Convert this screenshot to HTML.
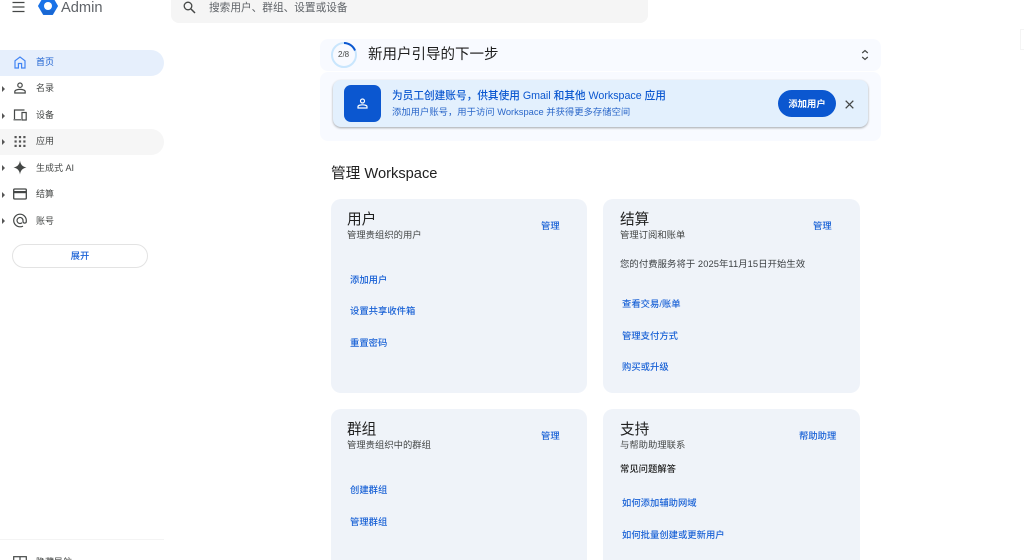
<!DOCTYPE html>
<html lang="zh">
<head>
<meta charset="utf-8">
<title>Admin</title>
<style>
html,body{margin:0;padding:0;width:1024px;height:560px;overflow:hidden;background:#fff}
body{position:relative;font-family:"Liberation Sans","Noto Sans CJK SC",sans-serif;color:#444746;filter:blur(.35px)}
.a{position:absolute;white-space:nowrap}
.nav{font-size:9px;line-height:14px;left:36px;color:#444746}
.tri{position:absolute;left:2px;width:0;height:0;border-left:3px solid #555;border-top:3px solid transparent;border-bottom:3px solid transparent}
.card{position:absolute;background:#eff3f9;border-radius:10px;width:257px}
.h{font-size:14.67px;line-height:18px;color:#1f1f1f}
.s{font-size:9.33px;line-height:13px;color:#444746}
.l{font-size:9.33px;line-height:13px;color:#1a62d6;font-weight:500}
svg{position:absolute;display:block}
</style>
</head>
<body>
<!-- top bar -->
<svg style="left:12px;top:1px" width="13" height="12" viewBox="0 0 13 12"><path d="M0.5 1.5H12.5M0.5 6H12.5M0.5 10.5H12.5" stroke="#444746" stroke-width="1.3" fill="none"/></svg>
<svg style="left:38px;top:-4px" width="20" height="20" viewBox="0 0 20 20"><path d="M5.5 1.5H14.5L19.5 10L14.5 18.5H5.5L0.5 10Z" fill="#1a73e8" stroke="#1a73e8" stroke-width="1" stroke-linejoin="round"/><path d="M14.5 18.5H5.5L3 14.2L17 14.2Z" fill="#1967d2"/><circle cx="10" cy="10" r="4" fill="#fff"/></svg>
<div class="a" style="left:61px;top:-1px;font-size:14.67px;line-height:18px;color:#5f6368">Admin</div>
<div class="a" style="left:171px;top:-10px;width:477px;height:33px;background:#f5f5f5;border-radius:8px"></div>
<svg style="left:183px;top:1px" width="13" height="13" viewBox="0 0 13 13"><circle cx="5" cy="5" r="3.8" stroke="#444746" stroke-width="1.3" fill="none"/><path d="M8 8L12 12" stroke="#444746" stroke-width="1.5"/></svg>
<div class="a" style="left:209px;top:1px;font-size:10.67px;line-height:14px;color:#5f6368">搜索用户、群组、设置或设备</div>

<!-- sidebar -->
<div class="a" style="left:-20px;top:50px;width:184px;height:26px;background:#e6effc;border-radius:13px"></div>
<div class="a" style="left:-20px;top:129px;width:184px;height:26px;background:#f6f6f6;border-radius:13px"></div>

<svg style="left:14px;top:56px" width="12" height="13" viewBox="0 0 12 13"><path d="M1 12V4.8L6 1L11 4.8V12H7.6V7.5H4.4V12Z" fill="none" stroke="#4285f4" stroke-width="1.2"/></svg>
<div class="a nav" style="top:55px;color:#1a5fd0">首页</div>

<div class="tri" style="top:86px"></div>
<svg style="left:14px;top:82px" width="12" height="12" viewBox="0 0 12 12"><circle cx="6" cy="3.2" r="2.2" fill="none" stroke="#444746" stroke-width="1.2"/><path d="M0.8 11V9.6C0.8 8.2 3.5 7.4 6 7.4S11.2 8.2 11.2 9.6V11Z" fill="none" stroke="#444746" stroke-width="1.2"/></svg>
<div class="a nav" style="top:81px">名录</div>

<div class="tri" style="top:113px"></div>
<svg style="left:13px;top:109px" width="14" height="12" viewBox="0 0 14 12"><path d="M1.5 10V1H11.5M0.5 10.8H8" fill="none" stroke="#444746" stroke-width="1.2"/><rect x="9" y="3.5" width="4.2" height="7.5" fill="none" stroke="#444746" stroke-width="1.2"/></svg>
<div class="a nav" style="top:108px">设备</div>

<div class="tri" style="top:139px"></div>
<svg style="left:14px;top:136px" width="12" height="11" viewBox="0 0 12 11" fill="#555"><rect x="0.5" y="0" width="2.2" height="2.2"/><rect x="4.9" y="0" width="2.2" height="2.2"/><rect x="9.3" y="0" width="2.2" height="2.2"/><rect x="0.5" y="4.4" width="2.2" height="2.2"/><rect x="4.9" y="4.4" width="2.2" height="2.2"/><rect x="9.3" y="4.4" width="2.2" height="2.2"/><rect x="0.5" y="8.8" width="2.2" height="2.2"/><rect x="4.9" y="8.8" width="2.2" height="2.2"/><rect x="9.3" y="8.8" width="2.2" height="2.2"/></svg>
<div class="a nav" style="top:134px">应用</div>

<div class="tri" style="top:165px"></div>
<svg style="left:13px;top:160px" width="14" height="15" viewBox="0 0 14 15"><path d="M7 0.5C7.6 4.6 9.4 6.7 13.5 7.5C9.4 8.3 7.6 10.4 7 14.5C6.4 10.4 4.6 8.3 0.5 7.5C4.6 6.7 6.4 4.6 7 0.5Z" fill="#444746"/></svg>
<div class="a nav" style="top:161px">生成式 AI</div>

<div class="tri" style="top:192px"></div>
<svg style="left:13px;top:188px" width="14" height="12" viewBox="0 0 14 12"><rect x="0.7" y="1" width="12.6" height="10" rx="1" fill="none" stroke="#444746" stroke-width="1.3"/><rect x="1" y="3" width="12" height="2.2" fill="#444746"/></svg>
<div class="a nav" style="top:187px">结算</div>

<div class="tri" style="top:218px"></div>
<svg style="left:13px;top:213px" width="14" height="15" viewBox="0 0 14 14"><path d="M10 12.6C9 13.1 8 13.3 7 13.3A6.3 6.3 0 1 1 13.3 7V8C13.3 9 12.6 9.6 11.7 9.6S10 9 10 8V7A3 3 0 1 0 9 9.2" fill="none" stroke="#444746" stroke-width="1.2"/></svg>
<div class="a nav" style="top:214px">账号</div>

<div class="a" style="left:12px;top:244px;width:134px;height:22px;border:1px solid #e3e3e3;border-radius:12px;background:#fff;text-align:center;font-size:9.33px;line-height:23px;color:#1a62d6;font-weight:500">展开</div>

<div class="a" style="left:0;top:539px;width:164px;height:1px;background:#f4f4f4"></div>
<svg style="left:13px;top:556px" width="14" height="12" viewBox="0 0 14 12"><rect x="0.7" y="0.7" width="12.6" height="10" fill="none" stroke="#444746" stroke-width="1.2"/><path d="M7 1V10" stroke="#444746" stroke-width="1.2"/></svg>
<div class="a nav" style="top:555px">隐藏导航</div>

<div class="a" style="left:1020px;top:29px;width:6px;height:21px;border:1px solid #f4f4f4;box-sizing:border-box"></div>

<!-- onboarding -->
<div class="a" style="left:320px;top:39px;width:561px;height:32px;background:#f8faff;border-radius:8px"></div>
<div class="a" style="left:320px;top:72px;width:561px;height:69px;background:#f8faff;border-radius:8px"></div>
<svg style="left:330px;top:41px" width="28" height="28" viewBox="0 0 28 28"><circle cx="14" cy="14" r="12" fill="none" stroke="#c9e6fd" stroke-width="2"/><path d="M14 2A12 12 0 0 1 25 9.5" fill="none" stroke="#0b57d0" stroke-width="2"/></svg>
<div class="a" style="left:338px;top:49px;font-size:8px;line-height:12px;color:#444746">2/8</div>
<div class="a" style="left:368px;top:46px;font-size:14.5px;line-height:19px;color:#1f1f1f">新用户引导的下一步</div>
<svg style="left:861px;top:49px" width="8" height="12" viewBox="0 0 8 12"><path d="M1.2 4L4 1.5L6.8 4M1.2 8L4 10.5L6.8 8" fill="none" stroke="#444746" stroke-width="1.2"/></svg>

<div class="a" style="left:333px;top:80px;width:535px;height:47px;background:#e3f0fd;border-radius:8px;box-shadow:0 1px 2px rgba(60,64,67,.45)"></div>
<div class="a" style="left:344px;top:85px;width:37px;height:37px;background:#0b57d0;border-radius:7px"></div>
<svg style="left:357px;top:98px" width="11" height="11" viewBox="0 0 11 11"><circle cx="5.5" cy="3" r="2" fill="none" stroke="#fff" stroke-width="1.2"/><path d="M1 10V8.6C1 7.4 3.4 6.8 5.5 6.8S10 7.4 10 8.6V10Z" fill="none" stroke="#fff" stroke-width="1.2"/></svg>
<div class="a" style="left:392px;top:89px;font-size:10.67px;line-height:14px;color:#0b57d0;font-weight:500">为员工创建账号，供其使用 Gmail 和其他 Workspace 应用</div>
<div class="a" style="left:392px;top:106px;font-size:9.33px;line-height:13px;color:#2b67c9">添加用户账号，用于访问 Workspace 并获得更多存储空间</div>
<div class="a" style="left:778px;top:90px;width:58px;height:27px;border-radius:14px;background:#0b57d0;color:#fff;font-size:9.33px;line-height:28px;text-align:center;font-weight:700">添加用户</div>
<svg style="left:845px;top:100px" width="9" height="9" viewBox="0 0 9 9"><path d="M0.7 0.7L8.3 8.3M8.3 0.7L0.7 8.3" stroke="#444746" stroke-width="1.3"/></svg>

<div class="a" style="left:331px;top:165px;font-size:14.67px;line-height:19px;color:#1f1f1f">管理 Workspace</div>

<!-- cards -->
<div class="card" style="left:331px;top:199px;height:194px;width:256px"></div>
<div class="a h" style="left:347px;top:211px">用户</div>
<div class="a s" style="left:347px;top:229px">管理贵组织的用户</div>
<div class="a l" style="left:541px;top:220px">管理</div>
<div class="a l" style="left:350px;top:274px">添加用户</div>
<div class="a l" style="left:350px;top:305px">设置共享收件箱</div>
<div class="a l" style="left:350px;top:337px">重置密码</div>

<div class="card" style="left:603px;top:199px;height:194px"></div>
<div class="a h" style="left:620px;top:211px">结算</div>
<div class="a s" style="left:620px;top:229px">管理订阅和账单</div>
<div class="a l" style="left:813px;top:220px">管理</div>
<div class="a s" style="left:620px;top:258px;color:#3c4043;letter-spacing:.08px">您的付费服务将于 2025年11月15日开始生效</div>
<div class="a l" style="left:622px;top:298px">查看交易/账单</div>
<div class="a l" style="left:622px;top:330px">管理支付方式</div>
<div class="a l" style="left:622px;top:361px">购买或升级</div>

<div class="card" style="left:331px;top:409px;height:170px;width:256px"></div>
<div class="a h" style="left:347px;top:421px">群组</div>
<div class="a s" style="left:347px;top:439px">管理贵组织中的群组</div>
<div class="a l" style="left:541px;top:430px">管理</div>
<div class="a l" style="left:350px;top:484px">创建群组</div>
<div class="a l" style="left:350px;top:516px">管理群组</div>

<div class="card" style="left:603px;top:409px;height:170px"></div>
<div class="a h" style="left:620px;top:421px">支持</div>
<div class="a s" style="left:620px;top:439px">与帮助助理联系</div>
<div class="a l" style="left:799px;top:430px">帮助助理</div>
<div class="a s" style="left:620px;top:463px;color:#1f1f1f;font-weight:500">常见问题解答</div>
<div class="a l" style="left:622px;top:497px">如何添加辅助网域</div>
<div class="a l" style="left:622px;top:529px">如何批量创建或更新用户</div>
</body>
</html>
